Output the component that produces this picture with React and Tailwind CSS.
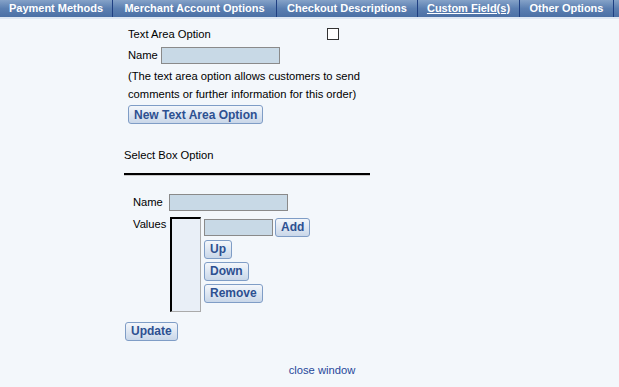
import React from 'react';

const tabs = [
  { label: 'Payment Methods', w: 'w-[113px]' },
  { label: 'Merchant Account Options', w: 'w-[164px]' },
  { label: 'Checkout Descriptions', w: 'w-[141px]' },
  { label: 'Custom Field(s)', w: 'w-[102px]', active: true },
  { label: 'Other Options', w: 'w-[94px]' },
];

function Btn({ children, className = '' }) {
  return (
    <button
      className={`h-[19px] px-[5px] rounded-[3px] border border-[#7f9dc6] bg-gradient-to-b from-[#f4f7fb] to-[#c9d7e9] text-[12px] font-bold leading-none text-[#2d5091] font-['Liberation_Sans',sans-serif] ${className}`}
    >
      {children}
    </button>
  );
}

function Field({ className = '' }) {
  return <div className={`h-[17px] border border-[#8a8a8a] bg-[#c8d9e6] ${className}`} />;
}

export default function App() {
  return (
    <div className="w-[619px] h-[387px] bg-[#f3f7fb] font-['Liberation_Sans',Arial,sans-serif] text-[11.2px] text-black overflow-hidden">
      {/* Tabs */}
      <div className="flex h-[19px] bg-gradient-to-b from-[#85a2c8] via-[#5b7fb1] to-[#4b70a5] border-b-2 border-[#dfe8f3]">
        {tabs.map(t => (
          <div
            key={t.label}
            className={`${t.w} shrink-0 flex items-center justify-center whitespace-nowrap border-r border-[#1f3f82] text-white font-bold text-[11px] leading-none ${t.active ? 'underline' : ''}`}
          >
            {t.label}
          </div>
        ))}
      </div>

      {/* Text area option */}
      <div className="pl-[128px] pt-[7px]">
        <div className="flex items-center h-[16px]">
          <span>Text Area Option</span>
          <span className="ml-[116px] w-[12px] h-[12px] border border-[#333] bg-white" />
        </div>
        <div className="flex items-center gap-[3px] mt-[5px] h-[17px]">
          <span>Name</span>
          <Field className="w-[119px]" />
        </div>
        <div className="mt-[3px] leading-[18px] w-[250px]">
          (The text area option allows customers to send comments or further information for this order)
        </div>
        <Btn className="mt-[2px]">New Text Area Option</Btn>
      </div>

      {/* Select box option */}
      <div className="pl-[124px] mt-[23px]">
        <div>Select Box Option</div>
        <div className="mt-[9px] w-[246px] border-t-2 border-black border-b border-b-[#c9c9c9]" />
        <div className="pl-[9px] mt-[18px] flex items-center gap-[10px] h-[17px]">
          <span className="w-[26px]">Name</span>
          <Field className="w-[119px]" />
        </div>
        <div className="pl-[9px] mt-[6px] flex">
          <span className="w-[37px] -mt-[1px]">Values</span>
          <div className="w-[31px] h-[95px] border-l-2 border-t-2 border-black border-r border-b border-r-[#aaa] border-b-[#aaa] bg-[#e9eff7]" />
          <div className="ml-[3px] flex flex-col items-start gap-[3px] pt-[1px]">
            <div className="flex items-center gap-[2px]">
              <Field className="w-[69px]" />
              <Btn>Add</Btn>
            </div>
            <Btn>Up</Btn>
            <Btn>Down</Btn>
            <Btn>Remove</Btn>
          </div>
        </div>
        <Btn className="mt-[10px] ml-[1px]">Update</Btn>
      </div>

      <div className="mt-[21px] text-center pl-[25px] text-[#27489a]">close window</div>
    </div>
  );
}
